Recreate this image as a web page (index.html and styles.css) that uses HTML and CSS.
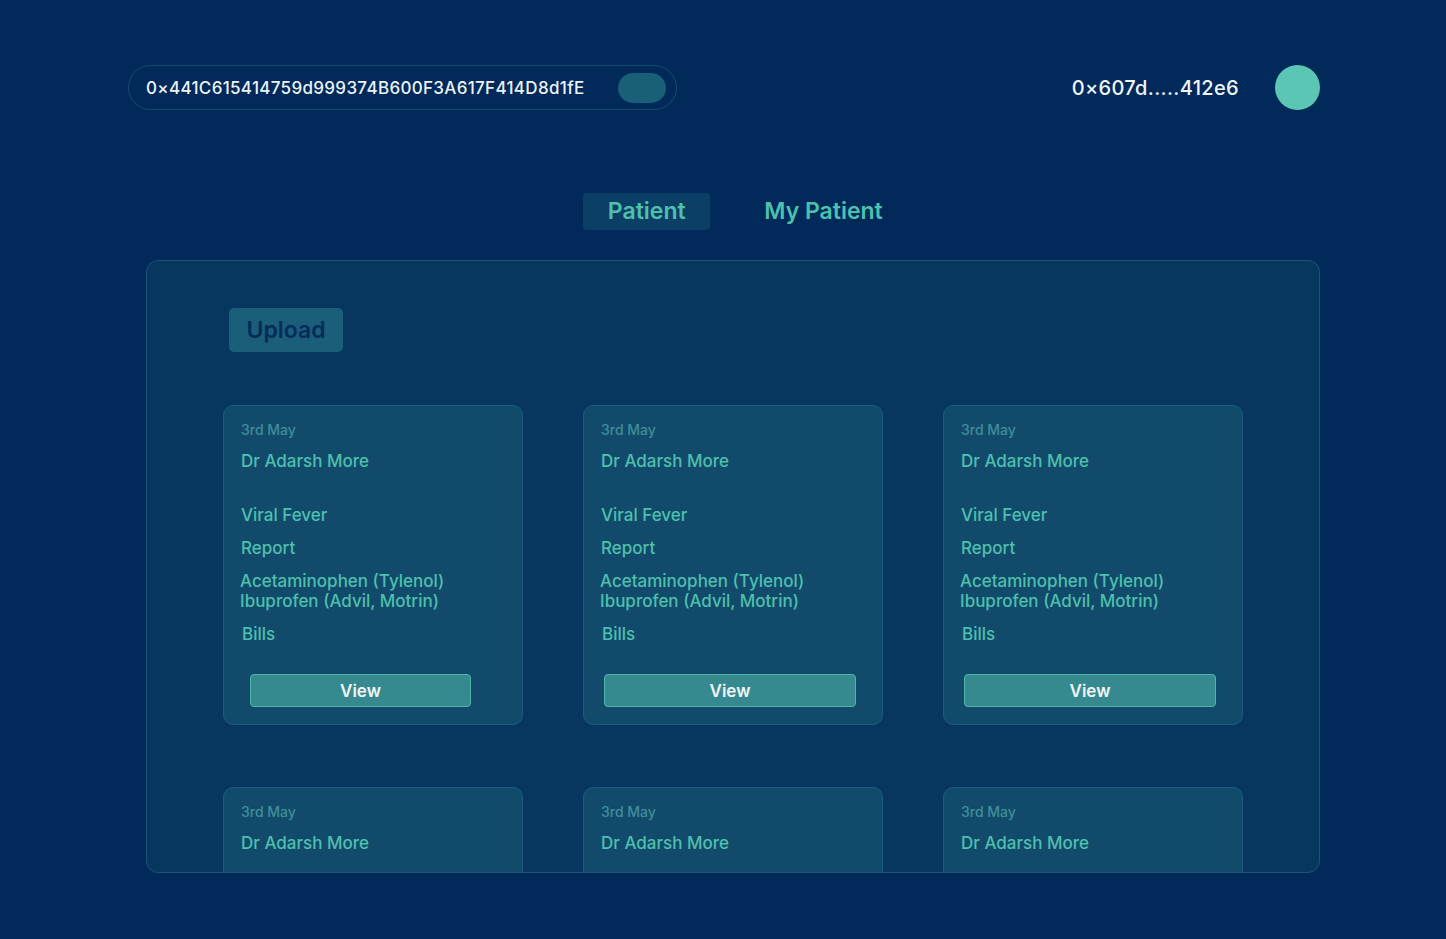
FILE: index.html
```html
<!DOCTYPE html>
<html lang="en">
<head>
<meta charset="utf-8">
<title>Patient Records</title>
<link rel="stylesheet" href="styles.css">
</head>
<body>
<header class="topbar">
  <div class="address-pill">
    <span class="address-text">0×441C615414759d999374B600F3A617F414D8d1fE</span>
    <span class="address-toggle"></span>
  </div>
  <div class="account">
    <span class="account-text">0×607d.....412e6</span>
    <span class="avatar"></span>
  </div>
</header>

<nav class="tabs">
  <div class="tab tab-active">Patient</div>
  <div class="tab">My Patient</div>
</nav>

<main class="panel">
  <button class="upload">Upload</button>
  <section class="grid">
    <article class="card">
      <div class="date">3rd May</div>
      <div class="doctor">Dr Adarsh More</div>
      <div class="line gap-lg">Viral Fever</div>
      <div class="line">Report</div>
      <div class="line meds">Acetaminophen (Tylenol)<br>Ibuprofen (Advil, Motrin)</div>
      <div class="line bills">Bills</div>
      <button class="view view-a">View</button>
    </article>
    <article class="card">
      <div class="date">3rd May</div>
      <div class="doctor">Dr Adarsh More</div>
      <div class="line gap-lg">Viral Fever</div>
      <div class="line">Report</div>
      <div class="line meds">Acetaminophen (Tylenol)<br>Ibuprofen (Advil, Motrin)</div>
      <div class="line bills">Bills</div>
      <button class="view view-b">View</button>
    </article>
    <article class="card">
      <div class="date">3rd May</div>
      <div class="doctor">Dr Adarsh More</div>
      <div class="line gap-lg">Viral Fever</div>
      <div class="line">Report</div>
      <div class="line meds">Acetaminophen (Tylenol)<br>Ibuprofen (Advil, Motrin)</div>
      <div class="line bills">Bills</div>
      <button class="view view-b">View</button>
    </article>
    <article class="card">
      <div class="date">3rd May</div>
      <div class="doctor">Dr Adarsh More</div>
    </article>
    <article class="card">
      <div class="date">3rd May</div>
      <div class="doctor">Dr Adarsh More</div>
    </article>
    <article class="card">
      <div class="date">3rd May</div>
      <div class="doctor">Dr Adarsh More</div>
    </article>
  </section>
</main>
</body>
</html>
```

FILE: styles.css
```css
* { box-sizing: border-box; }

html, body {
  margin: 0;
  padding: 0;
  height: 100%;
}

body {
  background: #012a5a;
  font-family: Inter, "Noto Sans", "Liberation Sans", sans-serif;
  color: #4dc0ae;
  overflow: hidden;
}

.topbar {
  display: flex;
  justify-content: space-between;
  align-items: center;
  padding: 65px 126px 0 128px;
}

.address-pill {
  display: flex;
  align-items: center;
  justify-content: space-between;
  width: 549px;
  height: 45px;
  border: 1.5px solid #164d6f;
  border-radius: 23px;
  padding: 0 10px 0 17px;
}

.address-text {
  color: #eef2f5;
  font-size: 17px;
  font-weight: 500;
  letter-spacing: 0.32px;
}

.address-toggle {
  width: 48px;
  height: 30px;
  border-radius: 15px;
  background: #1a5f78;
}

.account {
  display: flex;
  align-items: center;
  gap: 36px;
}

.account-text {
  color: #f2f5f7;
  font-size: 20px;
  font-weight: 500;
  letter-spacing: 0.33px;
}

.avatar {
  width: 45px;
  height: 45px;
  border-radius: 50%;
  background: #5bc6b4;
}

.tabs {
  display: flex;
  justify-content: center;
  align-items: center;
  gap: 54px;
  margin-top: 83px;
  padding-left: 20px;
}

.tab {
  font-size: 23px;
  font-weight: 600;
  color: #4dc0ae;
  line-height: 37px;
}

.tab-active {
  width: 127px;
  height: 37px;
  text-align: center;
  background: #0c3f66;
  border-radius: 4px;
}

.panel {
  margin: 30px 0 0 146px;
  width: 1174px;
  height: 613px;
  background: #07365f;
  border: 1px solid #1a5478;
  border-radius: 12px;
  overflow: hidden;
  padding: 47px 0 0 76px;
}

.upload {
  display: block;
  margin-left: 6px;
  width: 114px;
  height: 44px;
  border: none;
  border-radius: 5px;
  background: #1a5e7a;
  color: #052c58;
  font-family: inherit;
  font-size: 23px;
  font-weight: 600;
  padding: 0;
}

.grid {
  display: grid;
  grid-template-columns: repeat(3, 300px);
  column-gap: 60px;
  row-gap: 62px;
  margin-top: 53px;
}

.card {
  height: 320px;
  background: #124a6b;
  border: 1px solid #1c5b7b;
  border-radius: 10px;
  padding: 15px 0 0 17px;
}

.date {
  font-size: 14px;
  line-height: 17px;
  color: #3e8f98;
  font-weight: 500;
}

.doctor {
  margin-top: 13px;
  font-size: 17px;
  line-height: 20px;
  font-weight: 500;
}

.line {
  margin-top: 13px;
  font-size: 17px;
  line-height: 20px;
  font-weight: 500;
}

.gap-lg { margin-top: 34px; }

.meds { margin-left: -1px; }

.bills { margin-left: 1px; }

.view {
  display: block;
  margin-top: 30px;
  height: 33px;
  background: #368a8f;
  border: 1.5px solid #4fb7aa;
  border-radius: 4px;
  color: #f1f4f5;
  font-family: inherit;
  font-size: 17px;
  font-weight: 600;
  padding: 0;
}

.view-a {
  margin-left: 9px;
  width: 221px;
}

.view-b {
  margin-left: 3px;
  width: 252px;
}
```
